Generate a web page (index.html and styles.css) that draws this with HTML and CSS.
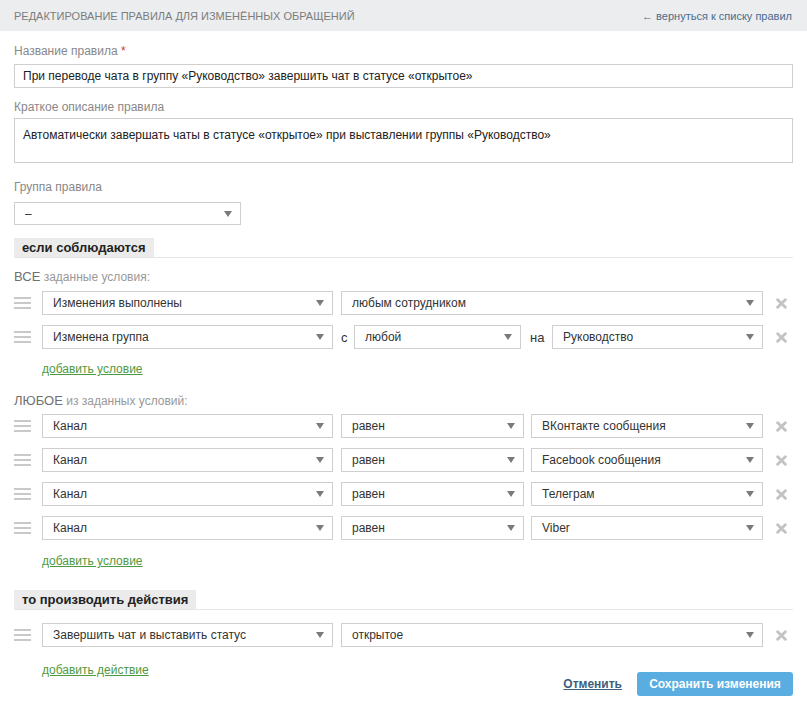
FILE: index.html
```html
<!DOCTYPE html>
<html lang="ru">
<head>
<meta charset="utf-8">
<title>Редактирование правила</title>
<link rel="stylesheet" href="styles.css">
</head>
<body>
<div class="header">
  <div class="header-title">Редактирование правила для изменённых обращений</div>
  <a class="back-link" href="#">← вернуться к списку правил</a>
</div>
<div class="main">
  <div class="label label-first">Название правила <span class="req">*</span></div>
  <div class="input">При переводе чата в группу «Руководство» завершить чат в статусе «открытое»</div>

  <div class="label label-second">Краткое описание правила</div>
  <div class="textarea">Автоматически завершать чаты в статусе «открытое» при выставлении группы «Руководство»</div>

  <div class="label label-third">Группа правила</div>
  <div class="select select-group"><span class="select-text">–</span><span class="caret"></span></div>

  <div class="section section-first"><div class="section-tab">если соблюдаются</div></div>

  <div class="sub-label sub-first"><span class="strong">ВСЕ</span> заданные условия:</div>
  <div class="rows">
    <div class="row">
      <div class="handle"><i></i><i></i><i></i></div>
      <div class="select w-main"><span class="select-text">Изменения выполнены</span><span class="caret"></span></div>
      <div class="select w-wide"><span class="select-text">любым сотрудником</span><span class="caret"></span></div>
      <div class="remove"><svg viewBox="0 0 10 10" width="11" height="11"><path d="M1.5 1.5 L8.5 8.5 M8.5 1.5 L1.5 8.5" stroke="#c3c3c3" stroke-width="2.6" stroke-linecap="round"/></svg></div>
    </div>
    <div class="row">
      <div class="handle"><i></i><i></i><i></i></div>
      <div class="select w-main"><span class="select-text">Изменена группа</span><span class="caret"></span></div>
      <span class="word word-c">с</span>
      <div class="select w-from"><span class="select-text">любой</span><span class="caret"></span></div>
      <span class="word word-na">на</span>
      <div class="select w-to"><span class="select-text">Руководство</span><span class="caret"></span></div>
      <div class="remove"><svg viewBox="0 0 10 10" width="11" height="11"><path d="M1.5 1.5 L8.5 8.5 M8.5 1.5 L1.5 8.5" stroke="#c3c3c3" stroke-width="2.6" stroke-linecap="round"/></svg></div>
    </div>
  </div>
  <a class="add-link add-first" href="#">добавить условие</a>

  <div class="sub-label sub-second"><span class="strong">ЛЮБОЕ</span> из заданных условий:</div>
  <div class="rows">
    <div class="row">
      <div class="handle"><i></i><i></i><i></i></div>
      <div class="select w-main"><span class="select-text">Канал</span><span class="caret"></span></div>
      <div class="select w-op"><span class="select-text">равен</span><span class="caret"></span></div>
      <div class="select w-val"><span class="select-text">ВКонтакте сообщения</span><span class="caret"></span></div>
      <div class="remove"><svg viewBox="0 0 10 10" width="11" height="11"><path d="M1.5 1.5 L8.5 8.5 M8.5 1.5 L1.5 8.5" stroke="#c3c3c3" stroke-width="2.6" stroke-linecap="round"/></svg></div>
    </div>
    <div class="row">
      <div class="handle"><i></i><i></i><i></i></div>
      <div class="select w-main"><span class="select-text">Канал</span><span class="caret"></span></div>
      <div class="select w-op"><span class="select-text">равен</span><span class="caret"></span></div>
      <div class="select w-val"><span class="select-text">Facebook сообщения</span><span class="caret"></span></div>
      <div class="remove"><svg viewBox="0 0 10 10" width="11" height="11"><path d="M1.5 1.5 L8.5 8.5 M8.5 1.5 L1.5 8.5" stroke="#c3c3c3" stroke-width="2.6" stroke-linecap="round"/></svg></div>
    </div>
    <div class="row">
      <div class="handle"><i></i><i></i><i></i></div>
      <div class="select w-main"><span class="select-text">Канал</span><span class="caret"></span></div>
      <div class="select w-op"><span class="select-text">равен</span><span class="caret"></span></div>
      <div class="select w-val"><span class="select-text">Телеграм</span><span class="caret"></span></div>
      <div class="remove"><svg viewBox="0 0 10 10" width="11" height="11"><path d="M1.5 1.5 L8.5 8.5 M8.5 1.5 L1.5 8.5" stroke="#c3c3c3" stroke-width="2.6" stroke-linecap="round"/></svg></div>
    </div>
    <div class="row">
      <div class="handle"><i></i><i></i><i></i></div>
      <div class="select w-main"><span class="select-text">Канал</span><span class="caret"></span></div>
      <div class="select w-op"><span class="select-text">равен</span><span class="caret"></span></div>
      <div class="select w-val"><span class="select-text">Viber</span><span class="caret"></span></div>
      <div class="remove"><svg viewBox="0 0 10 10" width="11" height="11"><path d="M1.5 1.5 L8.5 8.5 M8.5 1.5 L1.5 8.5" stroke="#c3c3c3" stroke-width="2.6" stroke-linecap="round"/></svg></div>
    </div>
  </div>
  <a class="add-link add-second" href="#">добавить условие</a>

  <div class="section section-second"><div class="section-tab">то производить действия</div></div>

  <div class="rows rows-action">
    <div class="row">
      <div class="handle"><i></i><i></i><i></i></div>
      <div class="select w-main"><span class="select-text">Завершить чат и выставить статус</span><span class="caret"></span></div>
      <div class="select w-wide"><span class="select-text">открытое</span><span class="caret"></span></div>
      <div class="remove"><svg viewBox="0 0 10 10" width="11" height="11"><path d="M1.5 1.5 L8.5 8.5 M8.5 1.5 L1.5 8.5" stroke="#c3c3c3" stroke-width="2.6" stroke-linecap="round"/></svg></div>
    </div>
  </div>

  <div class="bottom">
    <a class="add-link" href="#">добавить действие</a>
    <div class="buttons">
      <a class="cancel" href="#">Отменить</a>
      <button class="save" type="button">Сохранить изменения</button>
    </div>
  </div>
</div>
</body>
</html>
```

FILE: styles.css
```css
* { box-sizing: border-box; }

html, body {
  margin: 0;
  padding: 0;
  background: #ffffff;
  font-family: "Liberation Sans", Arial, sans-serif;
  font-size: 12px;
  color: #222222;
}

a { text-decoration: none; }

.header {
  height: 31px;
  background: #ebedef;
  display: flex;
  align-items: center;
  justify-content: space-between;
  padding: 0 15px 0 14px;
}

.header-title {
  text-transform: uppercase;
  color: #7c7c7c;
  font-size: 11px;
}

.back-link {
  color: #4a6b8c;
  font-size: 11px;
}

.main {
  padding: 0 14px;
}

.label {
  color: #888888;
  line-height: 14px;
}

.label-first { margin-top: 13px; }
.label-second { margin-top: 12px; }
.label-third { margin-top: 17px; }

.req { color: #d9372e; }

.input {
  margin-top: 6px;
  height: 24px;
  border: 1px solid #cfcfcf;
  line-height: 22px;
  padding: 0 8px;
  color: #222222;
}

.textarea {
  margin-top: 4px;
  height: 45px;
  border: 1px solid #cfcfcf;
  padding: 9px 8px;
  line-height: 14px;
  color: #222222;
}

.select {
  height: 24px;
  border: 1px solid #cfcfcf;
  background: #ffffff;
  display: flex;
  align-items: center;
  justify-content: space-between;
  padding: 0 8px 0 10px;
  color: #333333;
  flex: none;
}

.select-text {
  white-space: nowrap;
  overflow: hidden;
}

.caret {
  width: 0;
  height: 0;
  border-left: 4px solid transparent;
  border-right: 4px solid transparent;
  border-top: 6px solid #7a7a7a;
  flex: none;
}

.select-group {
  margin-top: 8px;
  width: 227px;
  height: 23px;
}

.section {
  display: flex;
  border-bottom: 1px solid #e6e6e6;
}

.section-first { margin-top: 13px; }
.section-second { margin-top: 22px; }

.section-tab {
  background: #ebebeb;
  height: 19px;
  line-height: 19px;
  padding: 0 8px;
  font-weight: bold;
  font-size: 13px;
  color: #222222;
}

.sub-label {
  color: #999999;
  line-height: 14px;
}

.sub-label .strong {
  color: #6f6f6f;
  font-size: 13px;
}

.sub-first { margin-top: 12px; }
.sub-second { margin-top: 18px; }

.rows {
  margin-top: 7px;
  display: flex;
  flex-direction: column;
  gap: 10px;
}

.sub-second + .rows { margin-top: 6px; }
.rows-action { margin-top: 13px; }

.row {
  display: flex;
  align-items: center;
  height: 24px;
}

.handle {
  width: 17px;
  margin-right: 11px;
  display: flex;
  flex-direction: column;
  gap: 3px;
  flex: none;
}

.handle i {
  display: block;
  height: 2px;
  background: #c9c9c9;
}

.w-main { width: 291px; margin-right: 8px; }
.w-wide { width: 422px; }
.w-from { width: 167px; }
.w-to { width: 211px; }
.w-op { width: 183px; margin-right: 7px; }
.w-val { width: 232px; }

.word {
  font-size: 13px;
  color: #333333;
  flex: none;
}

.word-c { width: 13px; }
.word-na { width: 31px; padding-left: 9px; }

.remove {
  width: 30px;
  flex: none;
  display: flex;
  justify-content: flex-end;
  padding-right: 6px;
}

.remove svg { display: block; }

.add-link {
  display: inline-block;
  color: #4f9a41;
  text-decoration: underline;
  line-height: 14px;
  margin-left: 28px;
}

.add-first { margin-top: 13px; }
.add-second { margin-top: 14px; }

.bottom {
  margin-top: 16px;
  display: flex;
  justify-content: space-between;
  align-items: flex-start;
}

.buttons {
  margin-top: 9px;
  display: flex;
  align-items: center;
  gap: 15px;
}

.cancel {
  color: #3d5f80;
  font-weight: bold;
  text-decoration: underline;
}

.save {
  height: 24px;
  width: 156px;
  border: none;
  border-radius: 3px;
  background: #5aade0;
  color: #ffffff;
  font-family: "Liberation Sans", Arial, sans-serif;
  font-weight: bold;
  font-size: 12px;
  padding: 0;
}
```
